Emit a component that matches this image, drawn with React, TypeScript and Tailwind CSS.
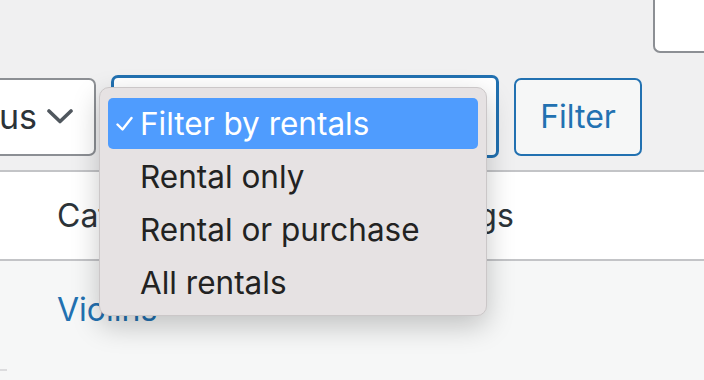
import React from 'react'

const options = ['Filter by rentals', 'Rental only', 'Rental or purchase', 'All rentals']

const ChevronDown = () => (
  <svg width="26" height="15" viewBox="0 0 26 15" fill="none" className="shrink-0">
    <path d="M2 2l11 10.5L24 2" stroke="#50575e" strokeWidth="3.6" strokeLinecap="round" strokeLinejoin="round" />
  </svg>
)

const Check = () => (
  <svg width="17" height="15" viewBox="0 0 17 15" fill="none">
    <path d="M1.5 8.5l5 5L15.5 2" stroke="white" strokeWidth="2.4" strokeLinecap="round" strokeLinejoin="round" />
  </svg>
)

export default function App() {
  return (
    <div className="relative w-[704px] h-[380px] overflow-hidden bg-[#f0f0f1] font-['Inter',sans-serif] text-[#2c3338]">
      {/* search box cut off at the top right */}
      <div className="flex justify-end h-[75px]">
        <div className="w-[51px] h-[53px] bg-white border-l-2 border-b-2 border-[#8c8f94] rounded-bl-[7px]" />
      </div>

      {/* filter controls */}
      <div className="flex items-center gap-[15px] h-[83px]">
        <div className="flex items-center w-[96px] h-[78px] bg-white border-y-2 border-r-2 border-[#8c8f94] rounded-r-[7px] text-[34px] leading-none">
          <span className="w-[48px] -ml-[1px]">us</span>
          <ChevronDown />
        </div>
        <div className="w-[388px] h-[83px] bg-white border-[3px] border-[#2271b1] rounded-[7px]" />
        <button className="w-[128px] h-[78px] bg-[#f6f7f7] border-2 border-[#2271b1] rounded-[7px] text-[#2271b1] text-[32px]">
          Filter
        </button>
      </div>

      {/* table */}
      <div className="mt-[12px] border-t-2 border-[#c3c4c7]">
        <div className="flex items-center h-[89px] bg-white border-b-2 border-[#c3c4c7] text-[32px] text-[#2c3338]">
          <span className="w-[441px] pl-[57px]">Categories</span>
          <span>Tags</span>
        </div>
        <div className="h-[120px] bg-[#f6f7f7] pt-[25px] pl-[57px] text-[32px] text-[#2271b1]">
          Violins
        </div>
      </div>
      <div className="absolute left-0 top-[369px] w-[7px] h-[2px] bg-[#dcdcde]" />

      {/* native select menu */}
      <div className="absolute left-[99px] top-[87px] w-[388px] h-[229px] pt-[10px] px-[8px] bg-[#e6e2e3] border border-[#cbc7c8] rounded-[10px] shadow-[0_10px_28px_rgba(0,0,0,0.22)]">
        <ul className="flex flex-col gap-[2px]">
          {options.map((label, i) => (
            <li
              key={label}
              className={
                i === 0
                  ? 'flex items-center h-[51px] rounded-[5px] bg-[#4f9cfe] text-white text-[31.5px]'
                  : 'flex items-center h-[51px] rounded-[5px] text-[#222222] text-[31.5px]'
              }
            >
              <span className="w-[32px] flex justify-center pl-[1px]">{i === 0 && <Check />}</span>
              {label}
            </li>
          ))}
        </ul>
      </div>
    </div>
  )
}
